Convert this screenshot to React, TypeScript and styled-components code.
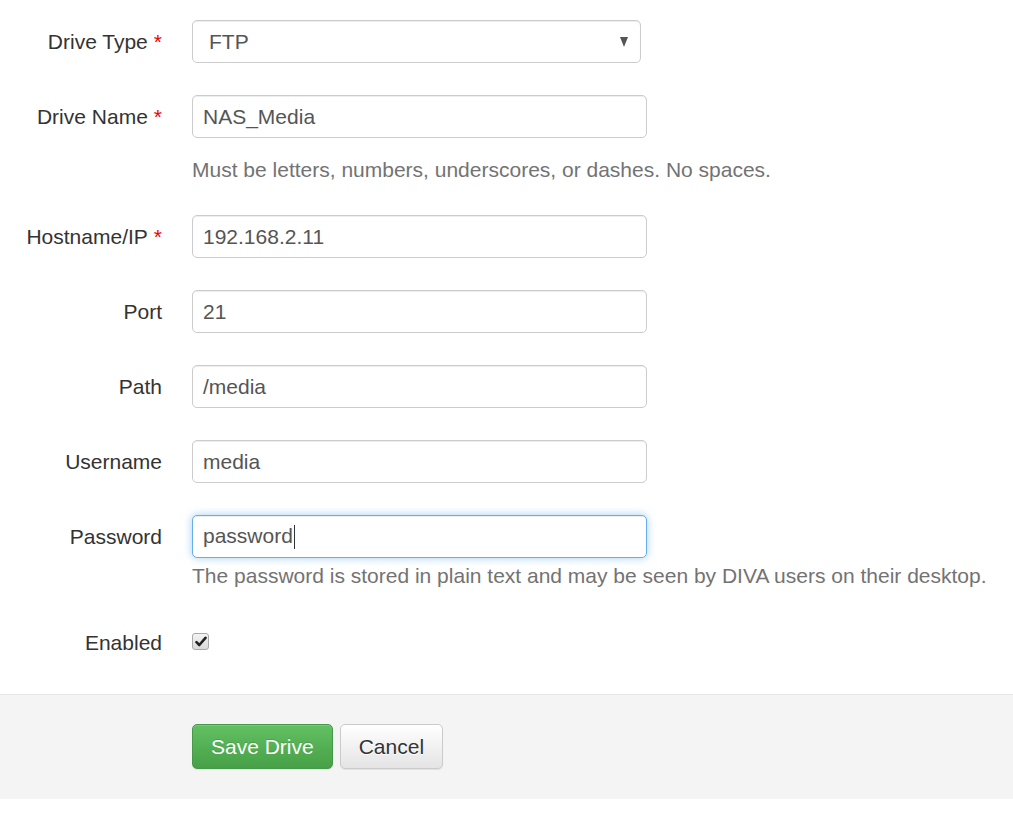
import React from "react";
import styled, { createGlobalStyle } from "styled-components";

const Global = createGlobalStyle`
  html, body { margin: 0; padding: 0; background: #fff; }
  body {
    font-family: "Liberation Sans", Arial, Helvetica, sans-serif;
    font-size: 21px;
    color: #333;
  }
`;

const Page = styled.div`
  width: 1013px;
  display: flex;
  flex-direction: column;
`;

const Form = styled.form`
  display: flex;
  flex-direction: column;
  gap: 32px;
  padding: 20px 0 30px;
`;

const Group = styled.div`
  display: grid;
  grid-template-columns: 162px 455px;
  column-gap: 30px;
  align-items: start;
`;

const Label = styled.label`
  height: 43px;
  display: flex;
  align-items: center;
  justify-content: flex-end;
  white-space: nowrap;
  color: #333;
`;

const Req = styled.span`
  color: #e00;
  margin-left: 6px;
`;

const Control = styled.div`
  display: flex;
  flex-direction: column;
`;

const Field = styled.div<{ $focus?: boolean; $width?: number }>`
  box-sizing: border-box;
  height: 43px;
  width: ${(p) => (p.$width ? `${p.$width}px` : "100%")};
  border: 1px solid ${(p) => (p.$focus ? "#66afe9" : "#ccc")};
  border-radius: 5px;
  background: #fff;
  padding: 0 12px 0 10px;
  display: flex;
  align-items: center;
  color: #555;
  box-shadow: ${(p) =>
    p.$focus
      ? "inset 0 1px 1px rgba(0,0,0,.075), 0 0 8px rgba(102,175,233,.6)"
      : "inset 0 1px 1px rgba(0,0,0,.075)"};
`;

const Value = styled.span`
  flex: 1;
  white-space: nowrap;
`;

const SelectText = styled.span`
  flex: 1;
  padding-left: 6px;
`;

const Arrow = styled.span`
  width: 0;
  height: 0;
  border-left: 4px solid transparent;
  border-right: 4px solid transparent;
  border-top: 10px solid #555;
  margin-right: 0;
`;

const Caret = styled.span`
  display: inline-block;
  width: 1px;
  height: 24px;
  background: #333;
  vertical-align: middle;
  margin-left: 1px;
`;

const Help = styled.div<{ $gap: number }>`
  margin-top: ${(p) => p.$gap}px;
  line-height: 26px;
  color: #737373;
  white-space: nowrap;
`;

const CheckCell = styled.div`
  height: 43px;
  display: flex;
  align-items: center;
`;

const Checkbox = styled.span`
  box-sizing: border-box;
  width: 17px;
  height: 17px;
  border: 1px solid #a9a9a9;
  border-radius: 3px;
  background: linear-gradient(#f4f4f4, #dadada);
  display: flex;
  align-items: center;
  justify-content: center;
  margin-top: -3px;
`;

const Footer = styled.div`
  border-top: 1px solid #e5e5e5;
  background: #f4f4f4;
  padding: 29px 0 30px 192px;
  display: flex;
  gap: 7px;
`;

const Button = styled.button<{ $primary?: boolean }>`
  box-sizing: border-box;
  height: 45px;
  padding: 0 18px;
  font-family: inherit;
  font-size: 21px;
  border-radius: 5px;
  cursor: pointer;
  color: ${(p) => (p.$primary ? "#fff" : "#333")};
  border: 1px solid ${(p) => (p.$primary ? "#46994a" : "#cbcbcb")};
  background: ${(p) =>
    p.$primary
      ? "linear-gradient(#62c062, #47a047)"
      : "linear-gradient(#fff, #e4e4e4)"};
  text-shadow: ${(p) =>
    p.$primary ? "0 -1px 0 rgba(0,0,0,.15)" : "0 1px 0 #fff"};
  box-shadow: inset 0 1px 0 rgba(255,255,255,.15), 0 1px 1px rgba(0,0,0,.075);
`;

type Row = {
  label: string;
  value: string;
  required?: boolean;
  help?: string;
  helpGap?: number;
  focus?: boolean;
};

const rows: Row[] = [
  {
    label: "Drive Name",
    value: "NAS_Media",
    required: true,
    help: "Must be letters, numbers, underscores, or dashes. No spaces.",
    helpGap: 19,
  },
  { label: "Hostname/IP", value: "192.168.2.11", required: true },
  { label: "Port", value: "21" },
  { label: "Path", value: "/media" },
  { label: "Username", value: "media" },
  {
    label: "Password",
    value: "password",
    focus: true,
    help: "The password is stored in plain text and may be seen by DIVA users on their desktop.",
    helpGap: 5,
  },
];

export default function App() {
  return (
    <Page>
      <Global />
      <Form onSubmit={(e) => e.preventDefault()}>
        <Group>
          <Label>
            Drive Type<Req>*</Req>
          </Label>
          <Control>
            <Field $width={449}>
              <SelectText>FTP</SelectText>
              <Arrow />
            </Field>
          </Control>
        </Group>
        {rows.map((r) => (
          <Group key={r.label}>
            <Label>
              {r.label}
              {r.required && <Req>*</Req>}
            </Label>
            <Control>
              <Field $focus={r.focus}>
                <Value>
                  {r.value}
                  {r.focus && <Caret />}
                </Value>
              </Field>
              {r.help && <Help $gap={r.helpGap ?? 5}>{r.help}</Help>}
            </Control>
          </Group>
        ))}
        <Group>
          <Label>Enabled</Label>
          <CheckCell>
            <Checkbox>
              <svg width="12" height="11" viewBox="0 0 12 11">
                <path
                  d="M1.5 6.2 L4.3 9 L10.5 1.8"
                  fill="none"
                  stroke="#222"
                  strokeWidth="2.6"
                  strokeLinecap="round"
                  strokeLinejoin="round"
                />
              </svg>
            </Checkbox>
          </CheckCell>
        </Group>
      </Form>
      <Footer>
        <Button type="button" $primary>
          Save Drive
        </Button>
        <Button type="button">Cancel</Button>
      </Footer>
    </Page>
  );
}
